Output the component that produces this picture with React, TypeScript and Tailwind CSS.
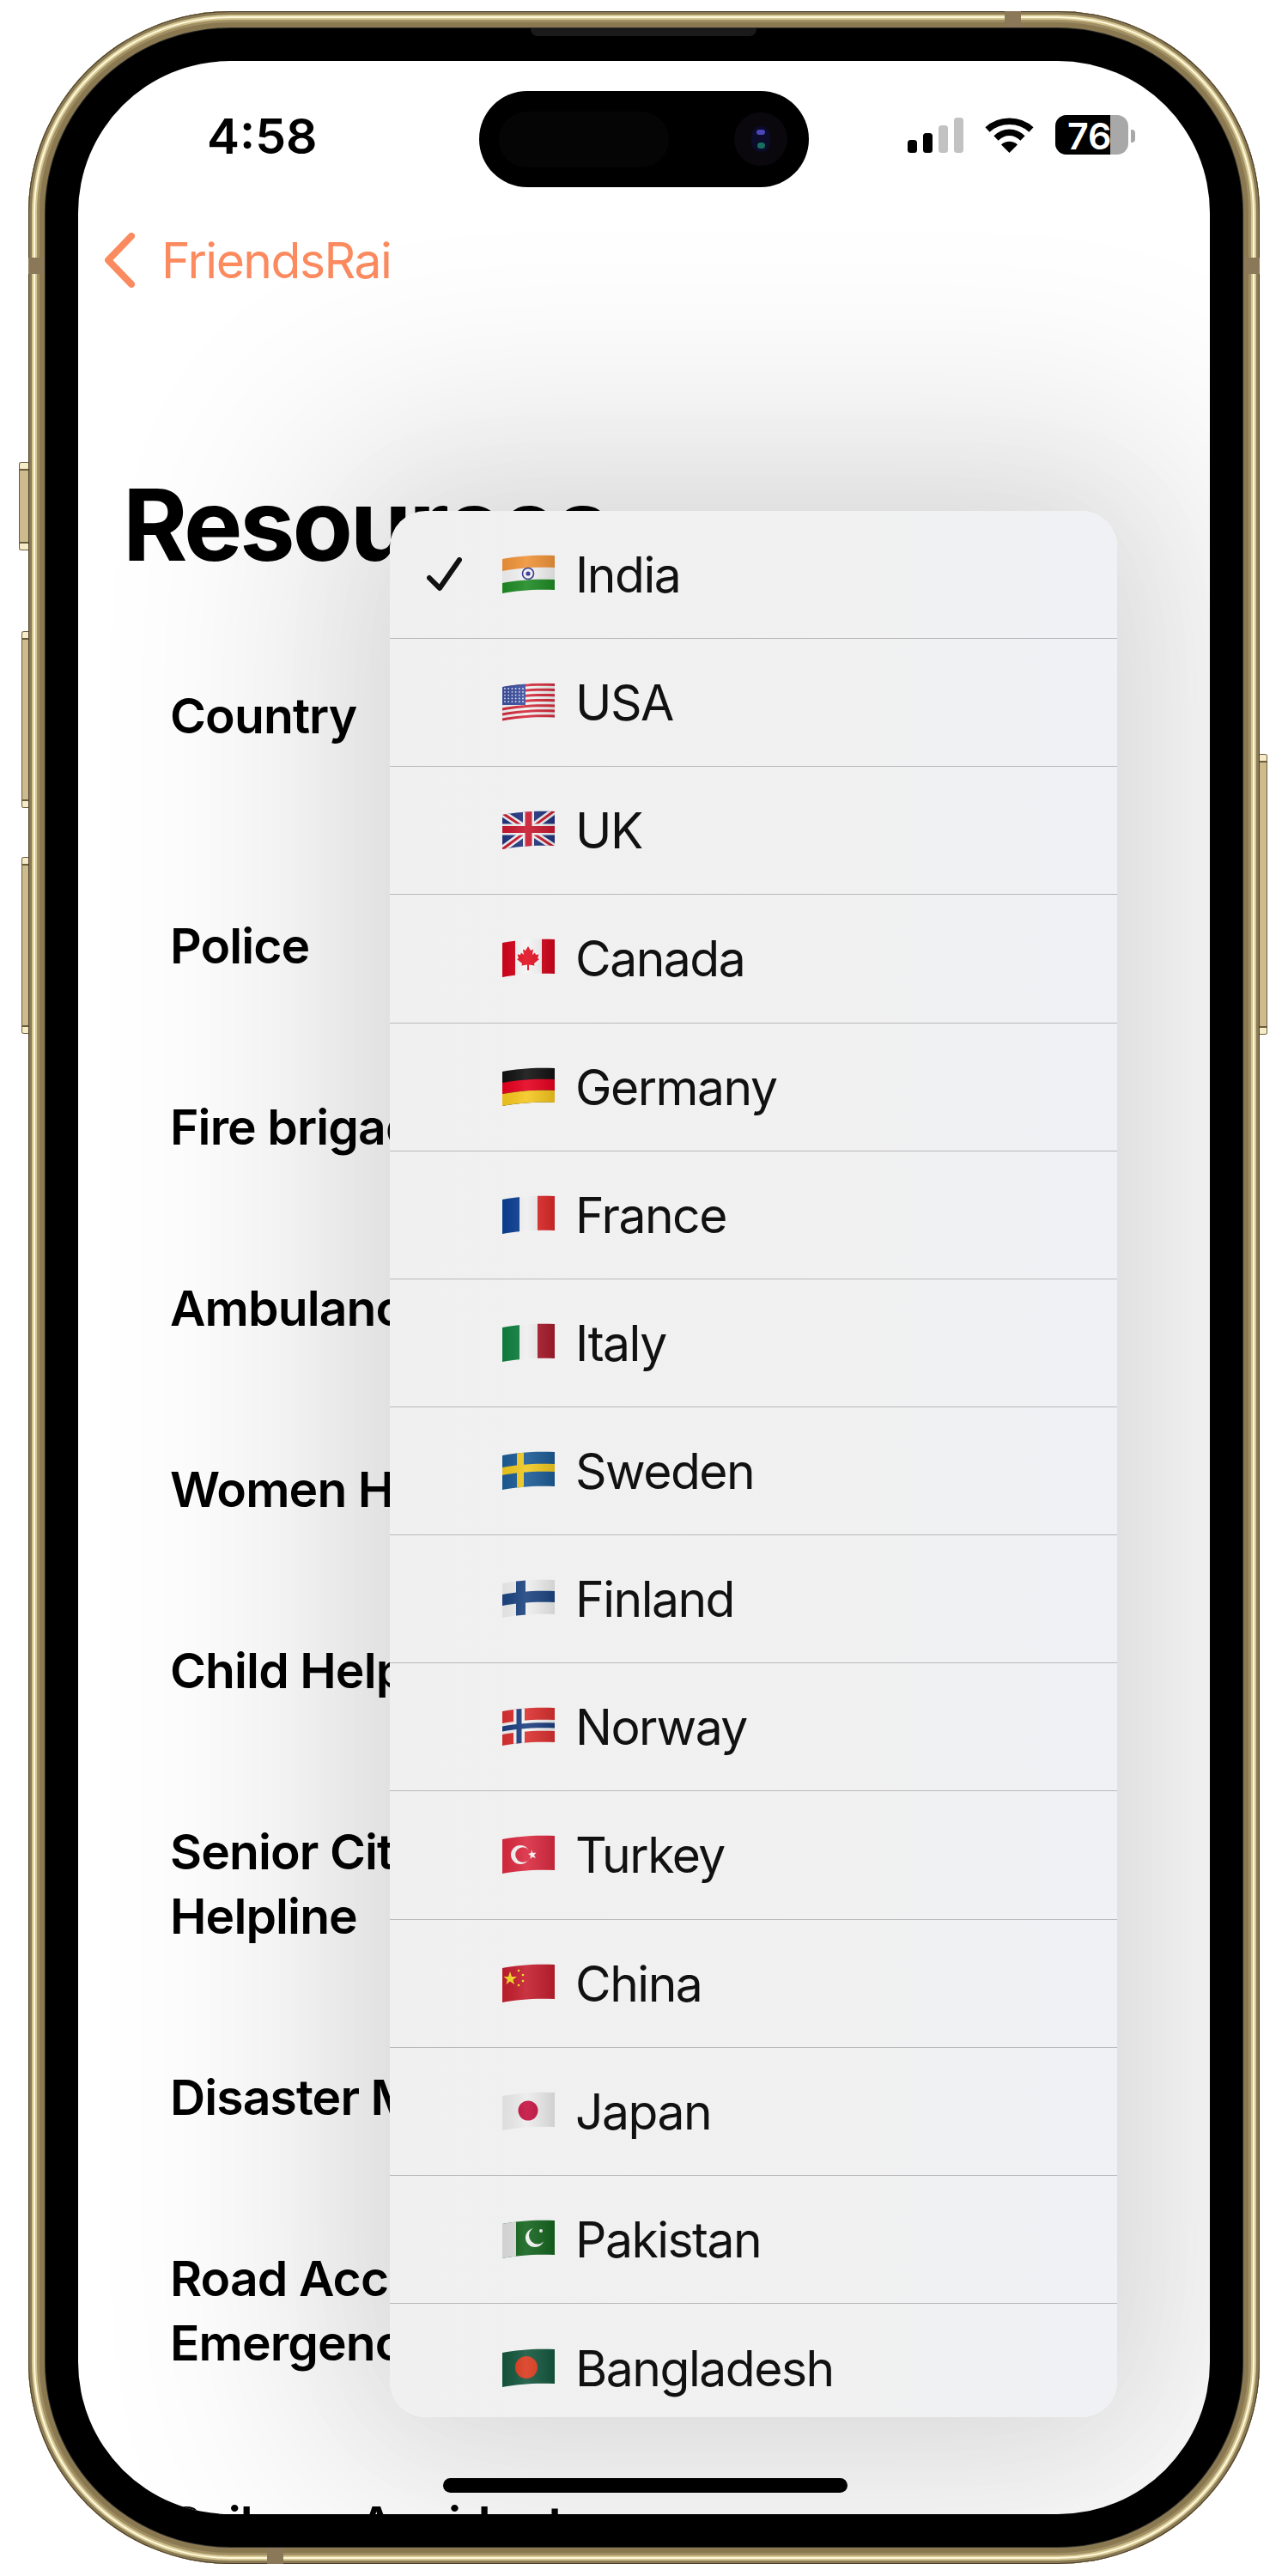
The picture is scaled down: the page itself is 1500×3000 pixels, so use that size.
import type { ReactNode } from "react";

const resources = [
  { label: ["Police"] },
  { label: ["Fire brigade"] },
  { label: ["Ambulance"] },
  { label: ["Women Helpline"] },
  { label: ["Child Helpline"] },
  { label: ["Senior Citizen", "Helpline"] },
  { label: ["Disaster Management"] },
  { label: ["Road Accident", "Emergency"] },
  { label: ["Railway Accident"] },
];

// waving stripe across the whole flag, between two heights
function Band({ from, to, color }: { from: number; to: number; color: string }) {
  return (
    <path
      d={`M0 ${from + 4} C18 ${from + 1} 34 ${from - 1} 61 ${from} V${to} C34 ${to - 1} 18 ${to + 1} 0 ${to + 4} Z`}
      fill={color}
    />
  );
}

function Flag({ id, children }: { id: string; children: ReactNode }) {
  return (
    <svg width="61" height="46" viewBox="0 0 61 46" className="shrink-0">
      <defs>
        <clipPath id={`wave-${id}`}>
          <path d="M0 5 C18 2 34 0 61 1 V41 C34 40 18 42 0 45 Z" />
        </clipPath>
        <linearGradient id={`shade-${id}`} x1="0" x2="1" y1="0" y2="0">
          <stop offset="0" stopColor="#000" stopOpacity="0.06" />
          <stop offset="0.45" stopColor="#fff" stopOpacity="0.1" />
          <stop offset="1" stopColor="#000" stopOpacity="0.12" />
        </linearGradient>
      </defs>
      <g clipPath={`url(#wave-${id})`}>
        {children}
        <rect width="61" height="46" fill={`url(#shade-${id})`} />
      </g>
    </svg>
  );
}

const usaStripes = [0, 1, 2, 3, 4, 5, 6];
const usaStars = [0, 1, 2, 3, 4];
const usaStarCols = [0, 1, 2, 3, 4, 5];

const flags: Record<string, ReactNode> = {
  India: (
    <>
      <rect width="61" height="46" fill="#f2f2f2" />
      <Band from={-2} to={15} color="#ef9339" />
      <Band from={29} to={48} color="#1f8a24" />
      <circle cx="30" cy="22" r="6.5" fill="none" stroke="#2b2f8c" strokeWidth="1.6" />
      <circle cx="30" cy="22" r="2.6" fill="#2b2f8c" />
    </>
  ),
  USA: (
    <>
      <rect width="61" height="46" fill="#f4f4f4" />
      {usaStripes.map((i) => (
        <Band key={i} from={1 + i * 6.1} to={4 + i * 6.1} color="#d42a3c" />
      ))}
      <rect width="27" height="26" fill="#3c4f9f" />
      {usaStars.map((r) =>
        usaStarCols.map((c) => (
          <circle key={`${r}-${c}`} cx={3 + c * 4.2} cy={7 + r * 3.8} r="0.9" fill="#e8ebf8" />
        )),
      )}
    </>
  ),
  UK: (
    <>
      <rect width="61" height="46" fill="#22357f" />
      <path d="M0 3 L61 43 M61 0 L0 45" stroke="#f2f2f2" strokeWidth="8" />
      <path d="M0 3 L61 43 M61 0 L0 45" stroke="#c8182f" strokeWidth="3" />
      <path d="M30.5 0 V46 M0 22 H61" stroke="#f2f2f2" strokeWidth="13" />
      <path d="M30.5 0 V46 M0 22 H61" stroke="#c8182f" strokeWidth="8" />
    </>
  ),
  Canada: (
    <>
      <rect width="61" height="46" fill="#f4f4f4" />
      <rect width="15" height="46" fill="#d3041b" />
      <rect x="46" width="15" height="46" fill="#d3041b" />
      <path
        d="M30 9 L33 14 L36 12.5 L35 19 L38 16.5 L39 19 L42.5 18.5 L41 23 L43 24 L37 29 L37.5 31.5 L31 30.5 V37 H29 V30.5 L22.5 31.5 L23 29 L17 24 L19 23 L17.5 18.5 L21 19 L22 16.5 L25 19 L24 12.5 L27 14 Z"
        fill="#e20f20"
      />
    </>
  ),
  Germany: (
    <>
      <rect width="61" height="46" fill="#111" />
      <Band from={14} to={27} color="#e5001f" />
      <Band from={27} to={48} color="#f5c71f" />
    </>
  ),
  France: (
    <>
      <rect width="61" height="46" fill="#efefef" />
      <rect width="20" height="46" fill="#0c3f92" />
      <rect x="41" width="20" height="46" fill="#dd2a2a" />
    </>
  ),
  Italy: (
    <>
      <rect width="61" height="46" fill="#efefef" />
      <rect width="20" height="46" fill="#0f8040" />
      <rect x="41" width="20" height="46" fill="#a81c2c" />
    </>
  ),
  Sweden: (
    <>
      <rect width="61" height="46" fill="#1c5b96" />
      <rect x="17" width="8" height="46" fill="#f0c820" />
      <Band from={15} to={24} color="#f0c820" />
    </>
  ),
  Finland: (
    <>
      <rect width="61" height="46" fill="#eeeeee" />
      <rect x="16" width="11" height="46" fill="#1c4480" />
      <Band from={14} to={27} color="#1c4480" />
    </>
  ),
  Norway: (
    <>
      <rect width="61" height="46" fill="#da2f2f" />
      <rect x="13" width="13" height="46" fill="#f2f2f2" />
      <Band from={15} to={28} color="#f2f2f2" />
      <rect x="16.5" width="6" height="46" fill="#1c3f80" />
      <Band from={18.5} to={24.5} color="#1c3f80" />
    </>
  ),
  Turkey: (
    <>
      <rect width="61" height="46" fill="#da2a40" />
      <circle cx="21" cy="23" r="11" fill="#f5f5f5" />
      <circle cx="24" cy="23" r="8.8" fill="#da2a40" />
      <path d="M34 17 L35.5 21 L39.5 20.5 L37 23.5 L39 27 L35 25.5 L32.5 28 L33 24 L30 22 L33.5 21 Z" fill="#f5f5f5" />
    </>
  ),
  China: (
    <>
      <rect width="61" height="46" fill="#c41e2e" />
      <path d="M9 9 L11 15 L17 15 L12.5 18.5 L14 24 L9 20.5 L4.5 24 L6 18.5 L1.5 15 L7 15 Z" fill="#f5dc2a" />
      <circle cx="19" cy="8" r="1.3" fill="#f5dc2a" />
      <circle cx="24" cy="13" r="1.3" fill="#f5dc2a" />
      <circle cx="24" cy="20" r="1.3" fill="#f5dc2a" />
      <circle cx="19" cy="25" r="1.3" fill="#f5dc2a" />
    </>
  ),
  Japan: (
    <>
      <rect width="61" height="46" fill="#ececec" />
      <circle cx="30" cy="22" r="11.5" fill="#c2103e" />
    </>
  ),
  Pakistan: (
    <>
      <rect width="61" height="46" fill="#14641e" />
      <rect width="16" height="46" fill="#dedede" />
      <circle cx="38" cy="21" r="11" fill="#f2f2f2" />
      <circle cx="41" cy="18.5" r="10" fill="#14641e" />
      <circle cx="45" cy="13" r="2" fill="#f2f2f2" />
    </>
  ),
  Bangladesh: (
    <>
      <rect width="61" height="46" fill="#14573e" />
      <circle cx="28" cy="22" r="13" fill="#d93a1e" />
    </>
  ),
};

const countries = Object.keys(flags);

function StatusBar() {
  return (
    <div className="flex h-[150px] shrink-0 items-start justify-between pl-[150px] pr-[87px] pt-[53px]">
      <span className="text-[57px] leading-[69px] font-semibold text-black">4:58</span>
      <div className="flex items-start pt-[13px]">
        <svg width="65" height="41" viewBox="0 0 65 41" className="mr-[25px]">
          <rect x="0" y="26" width="11" height="15" rx="3.5" fill="#000" />
          <rect x="18" y="18" width="11" height="23" rx="3.5" fill="#000" />
          <rect x="36" y="9" width="11" height="32" rx="3.5" fill="#c2c2c2" />
          <rect x="54" y="0" width="11" height="41" rx="3.5" fill="#c2c2c2" />
        </svg>
        <svg width="57" height="41" viewBox="0 0 57 41" className="mr-[25px]">
          <path d="M3 14 C17 1 40 1 54 14" fill="none" stroke="#000" strokeWidth="7.5" />
          <path d="M13 24 C22 15 35 15 44 24" fill="none" stroke="#000" strokeWidth="7.5" />
          <path d="M28.5 41 L19 31.5 C24 26.5 33 26.5 38 31.5 Z" fill="#000" />
        </svg>
        <div className="relative -mt-[3px] flex h-[46px] w-[85px] items-center overflow-hidden rounded-[13px] bg-[#a8a8a8]">
          <div className="h-full w-[64px] bg-black" />
          <span className="absolute left-[14px] top-[1px] text-[43px] leading-[46px] font-semibold text-white">76</span>
        </div>
        <div className="ml-[3px] mt-[14px] h-[15px] w-[5px] rounded-r-[4px] bg-[#a8a8a8]" />
      </div>
    </div>
  );
}

function ResourceRow({ lines, first }: { lines: string[]; first?: boolean }) {
  return (
    <div className={first ? "pb-[125px] pl-[107px] pt-[114px]" : "py-[68px] pl-[107px]"}>
      {lines.map((line) => (
        <p
          key={line}
          className="whitespace-nowrap text-[57px] leading-[75px] font-semibold tracking-[-0.9px] text-black"
        >
          {line}
        </p>
      ))}
    </div>
  );
}

function CountryMenu() {
  return (
    <div className="absolute left-[363px] top-[524px] h-[2220px] w-[847px] overflow-hidden rounded-[42px] bg-gradient-to-r from-[#f0f0f0] via-[#f1f1f1] via-60% to-[#eff1f4] shadow-[0_0_700px_100px_rgba(0,0,0,0.12),0_0_160px_rgba(0,0,0,0.05)]">
      {countries.map((name, index) => (
        <div
          key={name}
          className="flex h-[149.15px] items-center border-b border-[#b9b9bb] last:border-b-0"
        >
          <div className="w-[131px] shrink-0 pl-[43px]">
            {index === 0 && (
              <svg width="41" height="40" viewBox="0 0 41 40" className="block">
                <path
                  d="M3 24 L15 36 L38 3"
                  fill="none"
                  stroke="#111"
                  strokeWidth="6"
                  strokeLinecap="round"
                  strokeLinejoin="round"
                />
              </svg>
            )}
          </div>
          <Flag id={name}>{flags[name]}</Flag>
          <span className="ml-[24px] mt-[2px] text-[57px] leading-[70px] tracking-[-1.5px] text-[#111]">
            {name}
          </span>
        </div>
      ))}
    </div>
  );
}

function Screen() {
  return (
    <div className="relative flex h-[2857px] w-[1318px] flex-col overflow-hidden rounded-[177px] bg-white font-['Inter','Liberation_Sans',sans-serif]">
      <StatusBar />

      <div className="flex h-[164px] shrink-0 items-center pl-[31px]">
        <svg width="35" height="64" viewBox="0 0 35 64" className="shrink-0">
          <path
            d="M31 4 L4 32 L31 60"
            fill="none"
            stroke="#fb8a5f"
            strokeWidth="8"
            strokeLinecap="round"
            strokeLinejoin="round"
          />
        </svg>
        <span className="ml-[31px] mt-[2px] text-[57px] leading-[70px] tracking-[-1.5px] text-[#fb8a5f]">
          FriendsRai
        </span>
      </div>

      <h1 className="mt-[157px] shrink-0 whitespace-nowrap pl-[52px] text-[115px] leading-[140px] font-bold tracking-[-3.2px] text-black">
        Resources
      </h1>

      <ResourceRow lines={["Country"]} first />
      {resources.map((row) => (
        <ResourceRow key={row.label[0]} lines={row.label} />
      ))}

      <CountryMenu />

      {/* dynamic island */}
      <div className="absolute left-[467px] top-[35px] flex h-[112px] w-[384px] items-center justify-between rounded-[56px] bg-black pl-[23px] pr-[25px]">
        <div className="h-[65px] w-[198px] rounded-[33px] bg-[#050505]" />
        <div className="flex h-[62px] w-[62px] items-center justify-center rounded-full bg-[#0a080d]">
          <div className="flex h-[30px] w-[22px] flex-col items-center justify-between rounded-full bg-[#0b0b2a] py-[4px]">
            <div className="h-[6px] w-[10px] rounded-full bg-[#4a46b8]" />
            <div className="h-[7px] w-[9px] rounded-full bg-[#176f60]" />
          </div>
        </div>
      </div>

      <div className="absolute left-[425px] top-[2815px] h-[17px] w-[471px] rounded-full bg-black" />
    </div>
  );
}

function ButtonCaps() {
  return (
    <>
      <div className="h-[9px] border-b-2 border-[#6b5c3c] bg-[#f6edc8]" />
      <div className="flex-1" />
      <div className="h-[9px] border-t-2 border-[#6b5c3c] bg-[#f6edc8]" />
    </>
  );
}

export default function App() {
  return (
    <div className="h-[3000px] w-[1500px] bg-white pl-[33px] pt-[13px]">
      <div className="relative flex h-[2973px] w-[1434px] items-center justify-center rounded-[235px] bg-black shadow-[inset_0_0_0_1px_#4a3d28,inset_0_0_0_4px_#8a7a55,inset_0_0_0_6px_#d4c690,inset_0_0_0_8px_#fff8dc,inset_0_0_0_10px_#d4c690,inset_0_0_0_13px_#a08e64,inset_0_0_0_19px_#8a7850,inset_0_0_0_20px_#2a2a2a]">
        {/* side buttons */}
        <div className="absolute -left-[11px] top-[525px] flex h-[103px] w-[11px] flex-col overflow-hidden rounded-l-[3px] border border-r-0 border-[#6b5c3c] bg-[#cdbb8e]">
          <ButtonCaps />
        </div>
        <div className="absolute -left-[8px] top-[722px] flex h-[206px] w-[8px] flex-col overflow-hidden rounded-l-[3px] border border-r-0 border-[#6b5c3c] bg-[#cdbb8e]">
          <ButtonCaps />
        </div>
        <div className="absolute -left-[8px] top-[985px] flex h-[206px] w-[8px] flex-col overflow-hidden rounded-l-[3px] border border-r-0 border-[#6b5c3c] bg-[#cdbb8e]">
          <ButtonCaps />
        </div>
        <div className="absolute -right-[9px] top-[865px] flex h-[327px] w-[9px] flex-col overflow-hidden rounded-r-[3px] border border-l-0 border-[#6b5c3c] bg-[#cdbb8e]">
          <ButtonCaps />
        </div>

        {/* antenna bands */}
        <div className="absolute left-0 top-[287px] h-[19px] w-[18px] bg-[#8a7858]" />
        <div className="absolute right-0 top-[287px] h-[19px] w-[18px] bg-[#8a7858]" />
        <div className="absolute left-[1137px] top-0 h-[19px] w-[19px] bg-[#8a7858]" />
        <div className="absolute bottom-0 left-[278px] h-[19px] w-[19px] bg-[#8a7858]" />

        {/* speaker */}
        <div className="absolute left-[585px] top-[20px] h-[9px] w-[263px] rounded-b-[8px] bg-[#1a1a1a]" />

        <Screen />
      </div>
    </div>
  );
}
